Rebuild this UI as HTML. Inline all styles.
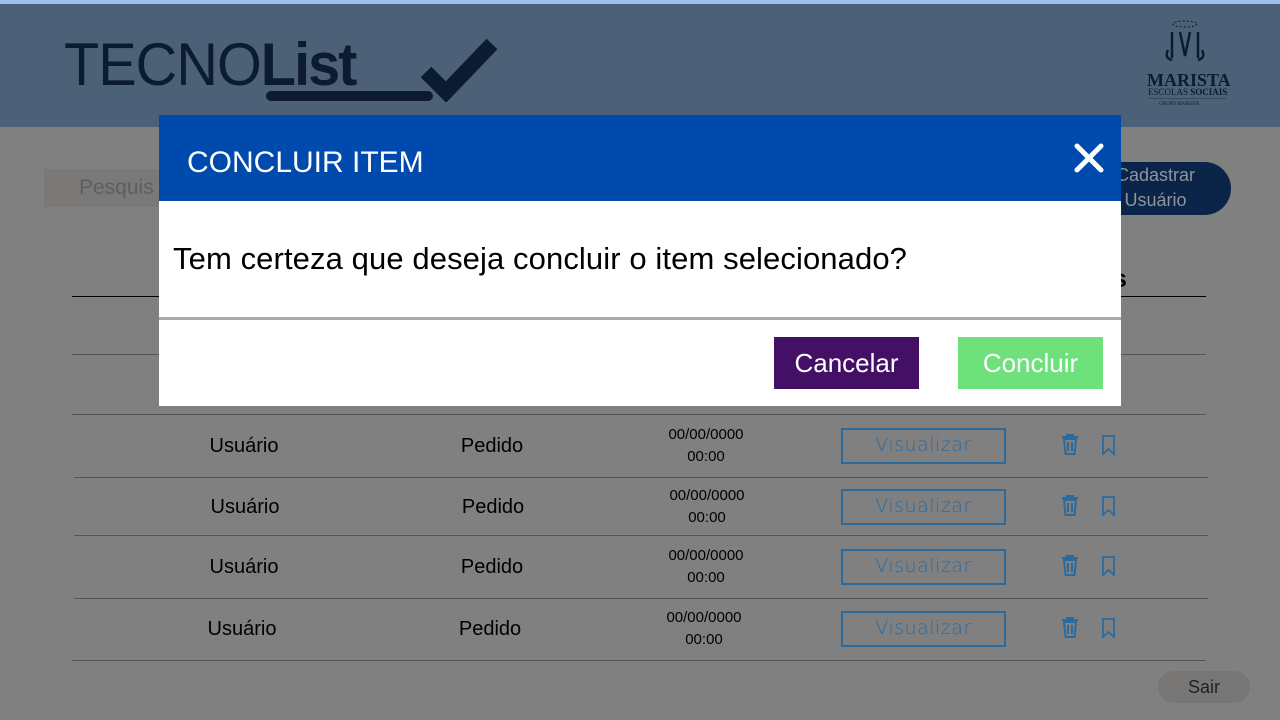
<!DOCTYPE html>
<html><head><meta charset="utf-8"><style>
*{margin:0;padding:0;box-sizing:border-box}
body{width:1280px;height:720px;overflow:hidden;background:#808080;font-family:"Liberation Sans",sans-serif;position:relative}
.a{position:absolute}
.top{left:0;top:0;width:1280px;height:4px;background:#9dc0ef}
.hdr{left:0;top:4px;width:1280px;height:123px;background:#4c6177}
.line{height:1px;background:#555}
.cell{font-size:20px;color:#000;text-align:center}
.dt{font-size:15px;color:#000;text-align:center;line-height:22px}
.vis{width:165px;height:36px;border:2px solid #2d6a9c;color:#2d6a9c;font-size:21px;text-align:center;line-height:31px;letter-spacing:.5px;font-family:"DejaVu Sans",sans-serif;font-weight:200;font-size:19px}
</style></head><body>
<div class="a top"></div>
<div class="a hdr"></div>
<div class="a" style="left:64px;top:32px;font-size:60px;color:#0c1b31;letter-spacing:-2px;line-height:66px;transform:scaleX(0.96);transform-origin:left"><span style="letter-spacing:-1px">TECNO</span><b>List</b></div>
<div class="a" style="left:266px;top:91px;width:167px;height:10px;border-radius:5px;background:#0c1b31"></div>
<svg class="a" style="left:418px;top:36px" width="82" height="66"><path d="M8 36 L28 56 L74 8" stroke="#0c1b31" stroke-width="15" fill="none"/></svg>
<svg class="a" style="left:1160px;top:18px" width="50" height="50"><ellipse cx="25" cy="6" rx="12" ry="3" fill="none" stroke="#0c1b31" stroke-dasharray="2 2"/><path d="M12 14 V40 M20 14 L25 38 L30 14 M38 14 V40 M8 32 Q4 40 12 42 M42 32 Q46 40 38 42" stroke="#0c1b31" stroke-width="2.5" fill="none"/></svg>
<div class="a" style="left:1147px;top:70px;font-family:'Liberation Serif',serif;font-weight:bold;font-size:18px;color:#0c1b31">MARISTA</div>
<div class="a" style="left:1148px;top:87px;font-family:'Liberation Serif',serif;font-size:9px;color:#0c1b31">ESCOLAS <b>SOCIAIS</b></div>
<div class="a" style="left:1148px;top:98px;width:78px;height:1px;background:#3a4a5c"></div>
<div class="a" style="left:1159px;top:102px;font-family:'Liberation Serif',serif;font-size:5px;color:#0c1b31">GRUPO MARISTA</div>

<div class="a" style="left:44px;top:169px;width:120px;height:38px;background:#7a7978;color:#5e5e5e;font-size:21px;padding:7px 0 0 35px">Pesquis</div>
<div class="a" style="left:1090px;top:162px;width:141px;height:53px;border-radius:27px;background:#0a2547;color:#8e959d;font-size:18px;text-align:center;line-height:25px;padding-top:1px;padding-right:10px">Cadastrar<br>Usuário</div>
<div class="a" style="left:1113px;top:265px;font-size:25px;font-weight:bold;color:#000">s</div>

<div class="a line" style="left:72px;top:296px;width:1134px;background:#000"></div>
<div class="a line" style="left:72px;top:354px;width:1134px"></div>
<div class="a line" style="left:72px;top:414px;width:1134px"></div>
<div class="a line" style="left:74px;top:477px;width:1134px"></div>
<div class="a line" style="left:74px;top:535px;width:1134px"></div>
<div class="a line" style="left:74px;top:598px;width:1134px"></div>
<div class="a line" style="left:72px;top:660px;width:1134px"></div>

<div id="rows"></div>
<script>
var ys=[447,508,568,630],xo=[0,1,0,-2],h='';
ys.forEach(function(y,i){var o=xo[i];
h+='<div class="a cell" style="left:'+(184+o)+'px;top:'+(y-12)+'px;width:120px">Usuário</div>';
h+='<div class="a cell" style="left:'+(432+o)+'px;top:'+(y-12)+'px;width:120px">Pedido</div>';
h+='<div class="a dt" style="left:'+(646+o)+'px;top:'+(y-23)+'px;width:120px">00/00/0000<br>00:00</div>';
h+='<div class="a vis" style="left:841px;top:'+(y-19)+'px">Visualizar</div>';
h+='<svg class="a" style="left:1060px;top:'+(y-13)+'px" width="22" height="22"><path d="M2 3 H18 M7 3 V1 H13 V3 M4 5 L5.5 20 H14.5 L16 5 Z M8 8 V17 M12 8 V17" stroke="#2d6a9c" stroke-width="2" fill="none"/></svg>';
h+='<svg class="a" style="left:1101px;top:'+(y-12)+'px" width="16" height="22"><path d="M2 1 H13 V19 L7.5 14 L2 19 Z" stroke="#2d6a9c" stroke-width="1.8" fill="none"/></svg>';});
document.getElementById('rows').innerHTML=h;
</script>
<div class="a" style="left:1158px;top:671px;width:92px;height:32px;border-radius:16px;background:#787674;color:#222;font-size:18px;text-align:center;line-height:33px">Sair</div>

<div class="a" style="left:159px;top:115px;width:962px;height:291px;background:#fff">
 <div style="height:86px;background:#004aad;color:#fff;font-size:30px;padding:31px 0 0 28px">CONCLUIR ITEM</div>
 <svg class="a" style="left:915px;top:28px" width="30" height="30"><path d="M3 3 L27 27 M27 3 L3 27" stroke="#fff" stroke-width="5" stroke-linecap="round"/></svg>
 <div class="a" style="left:14px;top:126px;font-size:31px;color:#000;letter-spacing:0.1px">Tem certeza que deseja concluir o item selecionado?</div>
 <div class="a" style="left:0;top:202px;width:962px;height:3px;background:#aaa"></div>
 <div class="a" style="left:615px;top:222px;width:145px;height:52px;background:#441066;color:#fff;font-size:26px;text-align:center;line-height:52px">Cancelar</div>
 <div class="a" style="left:799px;top:222px;width:145px;height:52px;background:#6ee07c;color:#fff;font-size:26px;text-align:center;line-height:52px">Concluir</div>
</div>
</body></html>
